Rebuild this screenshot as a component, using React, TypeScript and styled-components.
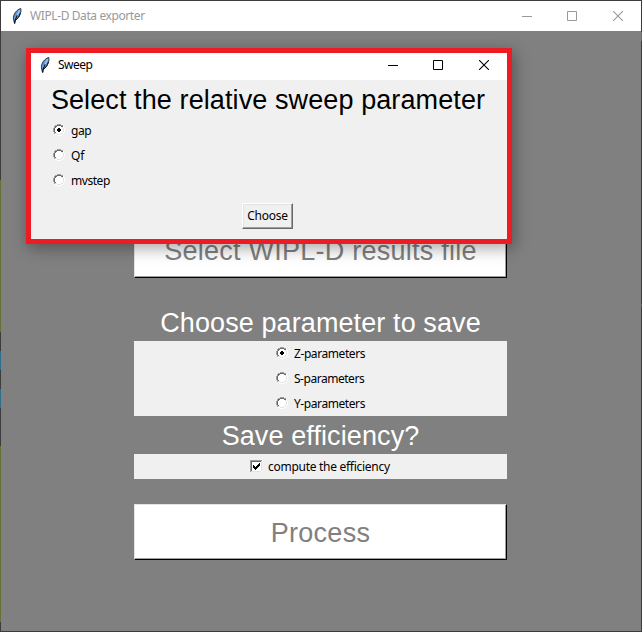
import React from "react";
import styled, { createGlobalStyle } from "styled-components";

const GlobalStyle = createGlobalStyle`
  * { box-sizing: border-box; }
  body { margin: 0; background: #3c3c3c; font-family: "Noto Sans", "Open Sans", sans-serif; }
`;

const Desktop = styled.div`
  width: 642px;
  height: 632px;
  padding: 1px;
  position: relative;
  overflow: hidden;
  background:
    linear-gradient(#2f5f7c, #2f5f7c) 641px 304px / 1px 3px no-repeat,
    linear-gradient(#a85a3c, #a85a3c) 641px 32px / 1px 9px no-repeat,
    linear-gradient(#3c3c3c 180px, #627236 180px 332px, #3c3c3c 332px 351px, #2f6d8c 351px 370px,
      #3c3c3c 370px 389px, #2f6d8c 389px 408px, #3c3c3c 408px 446px, #627236 446px 622px, #3c3c3c 622px)
      0 0 / 1px 632px no-repeat,
    #3c3c3c;
`;

const MainWindow = styled.main`
  height: 630px;
  background: #808080;
  display: flex;
  flex-direction: column;
`;

const TitleBar = styled.header<{ $inactive?: boolean }>`
  height: ${(p) => (p.$inactive ? 30 : 27)}px;
  flex: none;
  display: flex;
  align-items: center;
  background: #fff;
  color: ${(p) => (p.$inactive ? "#999" : "#000")};
  padding-left: ${(p) => (p.$inactive ? 11 : 9)}px;
  padding-bottom: ${(p) => (p.$inactive ? 0 : 3)}px;
`;

const Title = styled.h1<{ $track: number }>`
  margin: 0 auto 0 8px;
  font-size: 12px;
  font-weight: 400;
  line-height: 16px;
  letter-spacing: ${(p) => p.$track}px;
  white-space: nowrap;
`;

const Controls = styled.div`
  display: grid;
  grid-template-columns: 45px 46px 10px;
  margin-right: 18px;
`;

const Glyph = styled.svg`
  display: block;
  flex: none;
`;

const Content = styled.div`
  width: 373px;
  margin: 191px 0 0 133px;
  display: flex;
  flex-direction: column;
`;

const BigButton = styled.button`
  height: 56px;
  padding: 2px 0 0;
  border: 1px solid;
  border-color: #e3e3e3 #000 #000 #e3e3e3;
  box-shadow: inset -1px -1px #a0a0a0;
  background: #fff;
  color: #808080;
  font: 27px/52px "Liberation Sans", Arial, sans-serif;
  letter-spacing: 0.25px;
  white-space: nowrap;
`;

const Heading = styled.h2<{ $height: number; $drop?: number; $dark?: boolean }>`
  margin: 0;
  height: ${(p) => p.$height}px;
  padding-top: ${(p) => p.$drop ?? 0}px;
  font: 400 27px/38px "Liberation Sans", Arial, sans-serif;
  letter-spacing: 0.1px;
  text-align: center;
  color: ${(p) => (p.$dark ? "#000" : "#fff")};
  padding-right: ${(p) => (p.$dark ? 2 : 0)}px;
  white-space: nowrap;
`;

const Panel = styled.div<{ $left: number }>`
  background: #f0f0f0;
  padding-left: ${(p) => p.$left}px;
`;

const Option = styled.label`
  height: 25px;
  display: flex;
  align-items: center;
  gap: 6px;
  font-size: 12px;
  line-height: 16px;
  white-space: nowrap;
  > svg { margin-top: -2px; }
`;

const OptionText = styled.span<{ $track: number }>`
  padding-top: 1px;
  letter-spacing: ${(p) => p.$track}px;
`;

const Dialog = styled.section`
  position: absolute;
  left: 26px;
  top: 48px;
  width: 486px;
  height: 196px;
  border: 5px solid #ed1c24;
  background: #f0f0f0;
  box-shadow: 2px 4px 15px rgba(0, 0, 0, 0.36);
  display: flex;
  flex-direction: column;
`;

const ChooseButton = styled.button`
  align-self: flex-start;
  margin: 10px 0 0 211px;
  width: 51px;
  height: 26px;
  padding: 0;
  border: 1px solid;
  border-color: #fff #696969 #696969 #fff;
  box-shadow: inset -1px -1px #a0a0a0, inset 1px 1px #e3e3e3;
  background: #f0f0f0;
  color: #000;
  font: 12px/22px "Noto Sans", sans-serif;
  letter-spacing: -0.25px;
`;

type PixelProps = { rows: string[]; colors: Record<string, string> };

const Pixels = ({ rows, colors }: PixelProps) => (
  <Glyph width={rows[0].length} height={rows.length} shapeRendering="crispEdges">
    {rows.flatMap((row, y) =>
      [...row].map((c, x) => (colors[c] ? <rect key={`${x}-${y}`} x={x} y={y} width="1" height="1" fill={colors[c]} /> : null)),
    )}
  </Glyph>
);

const bevel = { a: "#a0a0a0", b: "#696969", l: "#e3e3e3", w: "#fff", k: "#000" };

const radioRows = (on: boolean) => [
  "....aaaa....",
  "..aabbbbaa..",
  ".abbwwwwbbw.",
  ".abwwwwwwlw.",
  on ? "abwwwkkwwwlw" : "abwwwwwwwwlw",
  on ? "abwwkkkkwwlw" : "abwwwwwwwwlw",
  on ? "abwwkkkkwwlw" : "abwwwwwwwwlw",
  on ? "abwwwkkwwwlw" : "abwwwwwwwwlw",
  ".abwwwwwwlw.",
  ".allwwwwllw.",
  "..wwllllww..",
  "....wwww....",
];

const checkRows = [
  "aaaaaaaaaaaa",
  "abbbbbbbbbbl",
  "abwwwwwwwwwl",
  "abwwwwwwwkwl",
  "abwwwwwwkkwl",
  "abwkwwwkkkwl",
  "abwkkwkkkwwl",
  "abwkkkkkwwwl",
  "abwwkkkwwwwl",
  "abwwwkwwwwwl",
  "abwwwwwwwwwl",
  "allllllllllw",
];

const Feather = () => (
  <Glyph width="10" height="16" viewBox="0 0 10 16">
    <path d="M8.7.5C6.3 1 3.8 3.4 2.4 6 1.3 8 1.2 10.5 1.7 12.2L2.6 15.5 3 12.4C5.6 11.2 7.6 8.3 8.5 5.1 9 3.3 9.2 1.8 8.7.5Z" fill="#5b96dc" stroke="#22262e" strokeWidth=".9" />
    <path d="M7.6 2.2 3.2 11.2" stroke="#9cc8f5" strokeWidth="1.4" />
    <path d="M5.2 7.2C4 9.4 3 12 2.6 15.5" fill="none" stroke="#101216" strokeWidth="1.1" />
    <path d="M8.3 5.2C7.6 8 5.6 11 3.4 12.2" fill="none" stroke="#101216" strokeWidth="1" />
  </Glyph>
);

const WindowControls = () => (
  <Controls>
    <Glyph width="10" height="10"><path d="M0 5.5h10" stroke="currentColor" /></Glyph>
    <Glyph width="10" height="10"><path d="M.5.5h9v9h-9z" fill="none" stroke="currentColor" /></Glyph>
    <Glyph width="10" height="10"><path d="M0 0 10 10M10 0 0 10" stroke="currentColor" strokeWidth="1.1" /></Glyph>
  </Controls>
);

const Radio = ({ text, on = false, track = 0 }: { text: string; on?: boolean; track?: number }) => (
  <Option>
    <Pixels rows={radioRows(on)} colors={bevel} />
    <OptionText $track={track}>{text}</OptionText>
  </Option>
);

const ProcessButton = styled(BigButton)`
  margin-top: 25px;
`;
const SettingsHeading = styled(Heading)`
  margin-top: 26px;
`;

export default function App() {
  return (
    <Desktop>
      <GlobalStyle />
      <MainWindow>
        <TitleBar $inactive>
          <Feather />
          <Title $track={-0.4}>WIPL-D Data exporter</Title>
          <WindowControls />
        </TitleBar>
        <Content>
          <BigButton>Select WIPL-D results file</BigButton>
          <SettingsHeading $height={37}>Choose parameter to save</SettingsHeading>
          <Panel $left={142}>
            <Radio text="Z-parameters" on track={-0.42} />
            <Radio text="S-parameters" track={-0.47} />
            <Radio text="Y-parameters" track={-0.42} />
          </Panel>
          <Heading $height={38} $drop={1}>Save efficiency?</Heading>
          <Panel $left={116}>
            <Option>
              <Pixels rows={checkRows} colors={bevel} />
              <OptionText $track={-0.28}>compute the efficiency</OptionText>
            </Option>
          </Panel>
          <ProcessButton>Process</ProcessButton>
        </Content>
      </MainWindow>
      <Dialog>
        <TitleBar>
          <Feather />
          <Title $track={-0.5}>Sweep</Title>
          <WindowControls />
        </TitleBar>
        <Heading $height={38} $drop={1} $dark>Select the relative sweep parameter</Heading>
        <Panel $left={22}>
          <Radio text="gap" on track={-0.4} />
          <Radio text="Qf" track={-0.2} />
          <Radio text="mvstep" track={-0.45} />
        </Panel>
        <ChooseButton>Choose</ChooseButton>
      </Dialog>
    </Desktop>
  );
}
